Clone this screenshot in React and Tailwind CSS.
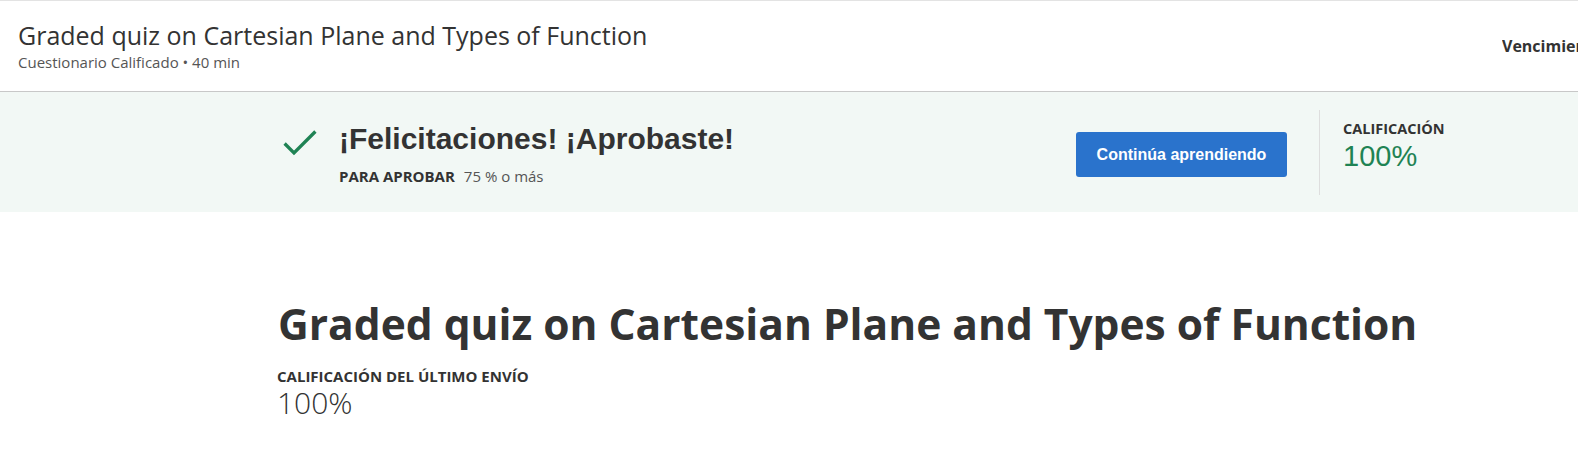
import React from "react";

const openSans = { fontFamily: '"Open Sans", "Liberation Sans", sans-serif' };
const arial = { fontFamily: '"Liberation Sans", Arial, sans-serif' };

export default function App() {
  return (
    <div className="w-[1578px] h-[455px] overflow-hidden bg-white text-[#333]" style={openSans}>
      {/* Header */}
      <header className="flex items-start justify-between h-[92px] border-t border-b border-t-[#e3e3e3] border-b-[#c8c8c8] pl-[18px] pt-[17px]">
        <div className="flex flex-col">
          <h1 className="text-[25px] leading-[34px] font-normal text-[#333] whitespace-nowrap">
            Graded quiz on Cartesian Plane and Types of Function
          </h1>
          <div className="text-[15px] leading-[20px] text-[#555] whitespace-nowrap">
            Cuestionario Calificado • 40 min
          </div>
        </div>
        <div className="w-[76px] overflow-hidden self-center -mt-[17px]">
          <span className="text-[16px] font-bold text-[#333] whitespace-nowrap">Vencimiento 24 de ago. 23:59 PDT</span>
        </div>
      </header>

      {/* Success band */}
      <section className="flex h-[120px] bg-[#f2f8f5] pt-[18px] pl-[283px]">
        <div className="flex flex-1 items-start pt-[12px]">
          <svg width="34" height="27" viewBox="0 0 34 27" className="shrink-0 mt-[7px]">
            <path d="M1.6 14.5 L11 24 L32.4 2.5" fill="none" stroke="#1f8354" strokeWidth="3.3" />
          </svg>
          <div className="ml-[22px] flex flex-col">
            <div
              className="text-[30px] leading-[32px] font-bold text-[#333] mt-[1px] whitespace-nowrap"
              style={arial}
            >
              ¡Felicitaciones! ¡Aprobaste!
            </div>
            <div className="flex items-baseline mt-[11px] text-[15px] leading-[20px] whitespace-nowrap">
              <span className="font-bold text-[#333]">PARA APROBAR</span>
              <span className="ml-[9px] text-[#555]">75 % o más</span>
            </div>
          </div>
        </div>
        <button
          className="mt-[22px] w-[211px] h-[45px] rounded-[3px] bg-[#2a73cc] text-white text-[16px] font-bold"
          style={arial}
        >
          Continúa aprendiendo
        </button>
        <div className="ml-[32px] w-px h-[85px] bg-[#dedede]" />
        <div className="ml-[23px] w-[235px] flex flex-col pt-[10px]">
          <div className="text-[14.5px] leading-[18px] font-bold text-[#333]">CALIFICACIÓN</div>
          <div className="text-[29px] leading-[30px] text-[#1f8354] mt-[3px]" style={arial}>
            100%
          </div>
        </div>
      </section>

      {/* Main */}
      <main className="pl-[278px] pt-[87px]">
        <h2 className="text-[42.5px] leading-[50px] font-bold text-[#333] whitespace-nowrap">
          Graded quiz on Cartesian Plane and Types of Function
        </h2>
        <div className="mt-[17px] text-[15px] leading-[20px] font-bold text-[#333] whitespace-nowrap -ml-[1px]">
          CALIFICACIÓN DEL ÚLTIMO ENVÍO
        </div>
        <div className="text-[30px] leading-[38px] font-light text-[#333] -ml-[1px] -mt-[2px]">100%</div>
      </main>
    </div>
  );
}
